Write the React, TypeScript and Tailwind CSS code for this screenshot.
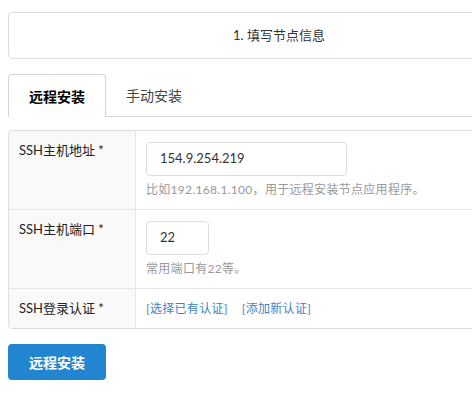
export default function App() {
  const font = { fontFamily: 'Lato, "Noto Sans CJK SC", sans-serif' };
  return (
    <div className="w-[472px] h-[393px] overflow-hidden bg-white" style={font}>
      <div className="w-[560px] pl-2 pt-3">
        {/* Step bar */}
        <div className="h-[47px] w-[542px] flex items-center justify-center rounded border border-[#dededf] text-[13px] text-[#333]">
          1. 填写节点信息
        </div>

        {/* Tabs */}
        <div className="mt-[15px] flex border-b border-[#d4d4d5] h-[43px]">
          <div className="-mb-px h-[43px] flex items-center px-5 rounded-t border border-b-0 border-[#d4d4d5] bg-white text-[14px] font-bold text-black">
            远程安装
          </div>
          <div className="h-[42px] flex items-center px-5 text-[14px] text-[#444]">
            手动安装
          </div>
        </div>

        {/* Form table */}
        <div className="mt-[13px] rounded border border-[#dededf] text-[13px] text-[#222]">
          <div className="flex border-b border-[#e6e6e6]">
            <div className="w-[127px] shrink-0 bg-[#f9f9f9] border-r border-[#e6e6e6] px-[10px] py-[11px] leading-[17px] rounded-tl">
              SSH主机地址 *
            </div>
            <div className="flex-1 px-[10px] py-[11px]">
              <div className="w-[201px] h-[34px] flex items-center rounded border border-[#dededf] px-[13px] text-[13px] text-[#333]">
                154.9.254.219
              </div>
              <div className="pt-[5px] text-[12px] leading-[17px] text-[#999] tracking-[0.3px]">
                比如192.168.1.100，用于远程安装节点应用程序。
              </div>
            </div>
          </div>
          <div className="flex border-b border-[#e6e6e6]">
            <div className="w-[127px] shrink-0 bg-[#f9f9f9] border-r border-[#e6e6e6] px-[10px] py-[11px] leading-[17px]">
              SSH主机端口 *
            </div>
            <div className="flex-1 px-[10px] py-[11px]">
              <div className="w-[63px] h-[34px] flex items-center rounded border border-[#dededf] px-[13px] text-[13px] text-[#333]">
                22
              </div>
              <div className="pt-[5px] text-[12px] leading-[17px] text-[#999] tracking-[0.3px]">
                常用端口有22等。
              </div>
            </div>
          </div>
          <div className="flex">
            <div className="w-[127px] shrink-0 bg-[#f9f9f9] border-r border-[#e6e6e6] px-[10px] py-[11px] leading-[17px] rounded-bl">
              SSH登录认证 *
            </div>
            <div className="flex-1 px-[10px] py-[11px] text-[12px] leading-[17px] text-[#4183c4] tracking-[0.3px]">
              <a className="cursor-pointer">[选择已有认证]</a>
              <a className="ml-[14px] cursor-pointer">[添加新认证]</a>
            </div>
          </div>
        </div>

        {/* Submit */}
        <button className="mt-[15px] w-[98px] h-[36px] rounded bg-[#2185d0] text-white text-[14px] font-bold">
          远程安装
        </button>
      </div>
    </div>
  );
}
